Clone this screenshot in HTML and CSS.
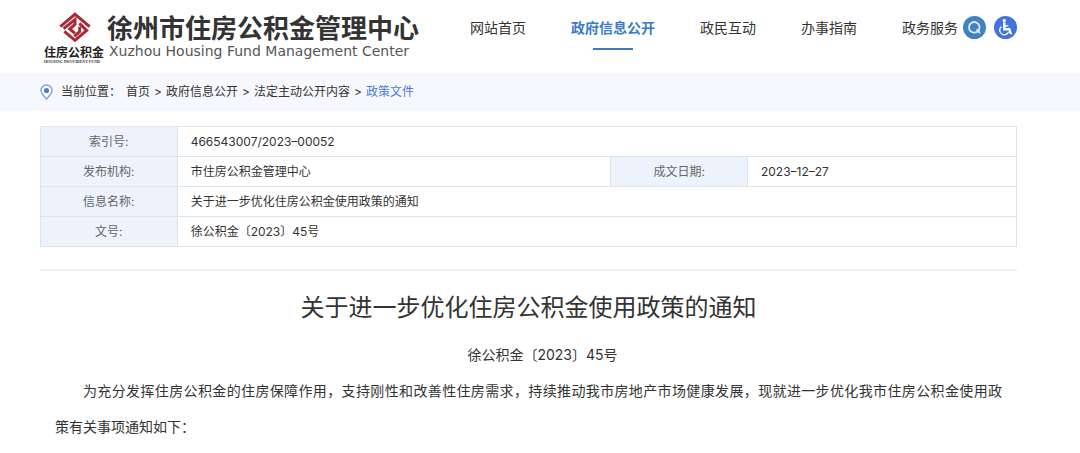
FILE: index.html
```html
<!DOCTYPE html>
<html lang="zh-CN">
<head>
<meta charset="utf-8">
<meta name="viewport" content="width=device-width, initial-scale=1">
<title>徐州市住房公积金管理中心</title>
<link rel="stylesheet" href="styles.css">
</head>
<body>
<header class="header">
  <a class="brand" href="#">
    <svg class="emblem" width="64" height="54" viewBox="0 0 64 54" aria-hidden="true">
      <g transform="translate(14 0) scale(.3333)" fill="none" stroke="#a52b36" stroke-width="9">
        <path d="M10 50 54 13 98 50"/>
        <path d="M20 56 54 29V43L38 57 54 70"/>
        <path d="M67 40 89 61 54 91 22 64"/>
        <path d="M52 79 68 65V50"/>
      </g>
      <text class="emblem-name" x="1" y="47">住房公积金</text>
      <text class="emblem-sub" x="1" y="53">HOUSING PROVIDENT FUND</text>
    </svg>
    <span class="brand-text">
      <span class="brand-name">徐州市住房公积金管理中心</span>
      <span class="brand-en">Xuzhou Housing Fund Management Center</span>
    </span>
  </a>
  <div class="header-right">
    <nav class="nav">
      <a href="#">网站首页</a>
      <a class="active" href="#">政府信息公开</a>
      <a href="#">政民互动</a>
      <a href="#">办事指南</a>
      <a href="#">政务服务</a>
    </nav>
    <div class="tools">
      <button class="tool search" type="button" aria-label="搜索">
        <svg width="23" height="23" viewBox="0 0 23 23" fill="none" stroke="#dcebf8" stroke-width="1.800"><circle cx="11.300" cy="11.300" r="5.300"/><path d="m13.500 13.500 3.500 3.500"/></svg>
      </button>
      <button class="tool access" type="button" aria-label="无障碍">
        <svg width="23" height="23" viewBox="0 0 23 23" fill="none" stroke="#fff"><circle cx="10.300" cy="4.600" r="1.700" fill="#fff" stroke="none"/><path stroke-width="2.500" d="M10.300 6.500v6.700h5l1.200 4"/><path stroke-width="1.300" d="M16 17.500h2M10.300 9.800h4M7.500 10.500a4.600 4.600 0 1 0 7 5.500"/></svg>
      </button>
    </div>
  </div>
</header>
<nav class="crumbs" aria-label="当前位置">
  <svg width="13" height="16" viewBox="0 0 13 16" aria-hidden="true"><path d="M6.500 15C4 12 1 9.500 1 6.300a5.500 5.300 0 0 1 11 0C12 9.500 9 12 6.500 15Z" fill="#fff" stroke="#7d9fe0" stroke-width="1.400"/><circle cx="6.500" cy="6.500" r="2.600" fill="#4a7bd5"/></svg>
  <span class="crumbs-label">当前位置：</span>
  <a href="#">首页</a><span>&gt;</span><a href="#">政府信息公开</a><span>&gt;</span><a href="#">法定主动公开内容</a><span>&gt;</span><a class="current" href="#">政策文件</a>
</nav>
<main class="main">
  <table class="info">
    <colgroup><col class="col-label"><col><col class="col-label"><col class="col-date"></colgroup>
    <tr><th scope="row">索引号:</th><td colspan="3">466543007/2023–00052</td></tr>
    <tr><th scope="row">发布机构:</th><td>市住房公积金管理中心</td><th scope="row">成文日期:</th><td>2023–12–27</td></tr>
    <tr><th scope="row">信息名称:</th><td colspan="3">关于进一步优化住房公积金使用政策的通知</td></tr>
    <tr><th scope="row">文号:</th><td colspan="3">徐公积金〔2023〕45号</td></tr>
  </table>
  <article class="article">
    <h1>关于进一步优化住房公积金使用政策的通知</h1>
    <p class="doc-no">徐公积金〔2023〕45号</p>
    <p>为充分发挥住房公积金的住房保障作用，支持刚性和改善性住房需求，持续推动我市房地产市场健康发展，现就进一步优化我市住房公积金使用政<span class="keep">策有关事项通知如下：</span></p>
  </article>
</main>
</body>
</html>
```
FILE: styles.css
```css
* { box-sizing: border-box; }
body {
  margin: 0;
  background: #fff;
  color: #333;
  font: 12px/20px Inter, "Noto Sans CJK SC", sans-serif;
}
a { color: inherit; text-decoration: none; }
svg { display: block; flex: none; }

.header {
  display: flex;
  justify-content: space-between;
  align-items: flex-start;
  padding: 0 63px 9px 43px;
}
.brand { display: flex; padding-top: 10px; }
.emblem-name { font: bold 12px "Noto Sans CJK SC", sans-serif; fill: #222; }
.emblem-sub { font: bold 4px "Liberation Serif", serif; fill: #333; }
.brand-text { display: flex; flex-direction: column; padding-top: 4px; white-space: nowrap; }
.brand-name { font-size: 26px; line-height: 30px; font-weight: bold; }
.brand-en { padding-left: 2px; font: 14px/14px "DejaVu Sans", sans-serif; color: #555; }

.header-right { display: flex; gap: 5px; padding-top: 16px; }
.nav { display: flex; gap: 45px; font-size: 14px; line-height: 24px; white-space: nowrap; }
.nav .active { color: #3b7bc4; font-weight: bold; }
.nav .active::after {
  content: "";
  display: block;
  width: 40px;
  height: 2px;
  margin: 8px auto 0;
  background: #3b7bc4;
}
.tools { display: flex; gap: 8px; }
.tool { width: 23px; height: 23px; padding: 0; border: 0; border-radius: 50%; }
.search { background: #4182c4; }
.access { background: #4274d9; }

.crumbs {
  display: flex;
  align-items: center;
  gap: 4px;
  padding: 9px 40px;
  background: #f6f8fd;
}
.crumbs-label { padding: 0 1px 0 4px; }
.crumbs .current { color: #4d7cd6; }

.main { padding: 15px 63px 16px 40px; }
.info { width: 100%; border-collapse: collapse; table-layout: fixed; }
.col-label { width: 14%; }
.col-date { width: 269px; }
.info th, .info td { height: 30px; padding: 0 13px; border: 1px solid #dce4ec; text-align: left; }
.info th { background: #ecf3fc; color: #666; font-weight: normal; text-align: center; }

.article {
  margin-top: 22px;
  padding: 19px 15px 0;
  border-top: 2px solid #ebf0f5;
  font-size: 14px;
  line-height: 36px;
}
.article h1 { margin: 0 0 11px; font-size: 24px; line-height: 36px; font-weight: normal; text-align: center; }
.article p { margin: 0; text-indent: 2em; text-align: justify; }
.article .doc-no { text-align: center; }
.keep { white-space: nowrap; }
```
